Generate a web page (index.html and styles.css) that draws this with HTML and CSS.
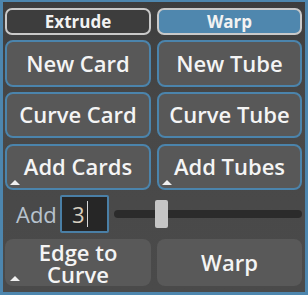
FILE: index.html
```html
<!DOCTYPE html>
<html lang="en">
<head>
    <meta charset="UTF-8">
    <title>Card Tools</title>
    <link rel="stylesheet" href="styles.css">
</head>
<body>
    <div class="panel">
        <div class="tabs">
            <button class="tab">Extrude</button>
            <button class="tab active">Warp</button>
        </div>
        <div class="grid">
            <button class="btn">New Card</button>
            <button class="btn">New Tube</button>
            <button class="btn">Curve Card</button>
            <button class="btn">Curve Tube</button>
            <button class="btn menu">Add Cards</button>
            <button class="btn menu">Add Tubes</button>
        </div>
        <div class="add-row">
            <span class="add-label">Add</span>
            <div class="count">3<span class="caret"></span></div>
            <div class="slider">
                <div class="groove"></div>
                <div class="thumb"></div>
            </div>
        </div>
        <div class="grid bottom">
            <button class="btn flat menu two-line">Edge to<br>Curve</button>
            <button class="btn flat">Warp</button>
        </div>
    </div>
</body>
</html>
```

FILE: styles.css
```css
body {
    margin: 0;
    font-family: "Open Sans", "Noto Sans", sans-serif;
}
.panel {
    width: 308px;
    height: 295px;
    box-sizing: border-box;
    border: 3px solid #4d86ae;
    border-top-width: 2px;
    padding: 6px 3px 1px 2px;
    background: linear-gradient(#3d3d3d, #484848 40%, #4a4a4a);
    display: flex;
    flex-direction: column;
}
.tabs {
    display: grid;
    grid-template-columns: 146px 145px;
    gap: 6px;
    height: 27px;
}
.tab {
    font-family: inherit;
    font-size: 17px;
    font-weight: 700;
    color: #f2f2f2;
    background: #3d3d3d;
    border: 2px solid #c9c9c9;
    border-radius: 7px;
    padding: 0;
    line-height: 1;
}
.tab.active {
    background: #4f87ae;
}
.grid {
    display: grid;
    grid-template-columns: 146px 145px;
    grid-auto-rows: 46px;
    gap: 6px;
    margin-top: 5px;
}
.grid .btn:nth-child(-n+2) {
    height: 47px;
}
.btn {
    position: relative;
    font-family: inherit;
    font-size: 22px;
    font-weight: 600;
    color: #f4f4f4;
    background: #585858;
    border: 2px solid #4b84ac;
    border-radius: 8px;
    padding: 0;
    line-height: 1.05;
}
.btn.menu::after {
    content: "";
    position: absolute;
    left: 3px;
    bottom: 3px;
    border-left: 5px solid transparent;
    border-right: 5px solid transparent;
    border-bottom: 5px solid #f0f0f0;
}
.btn.flat {
    border-color: transparent;
    background: #595959;
}
.bottom {
    grid-auto-rows: 51px;
    margin-top: 6px;
}
.two-line {
    line-height: 22px;
    padding-bottom: 2px;
}
.add-row {
    display: flex;
    align-items: center;
    height: 38px;
    margin-top: 5px;
}
.add-label {
    font-size: 22px;
    color: #b8c3ce;
    margin-left: 11px;
    width: 44px;
}
.count {
    box-sizing: border-box;
    width: 49px;
    height: 38px;
    background: #262626;
    border: 2px solid #4a7fa6;
    border-radius: 2px;
    color: #d8cfc0;
    font-size: 22px;
    padding-left: 10px;
    display: flex;
    align-items: center;
}
.caret {
    width: 1px;
    height: 26px;
    background: #d8d8d8;
    margin-left: 2px;
}
.slider {
    position: relative;
    flex: 1;
    height: 30px;
    margin-left: 5px;
}
.groove {
    position: absolute;
    left: 0;
    right: 0;
    top: 11px;
    height: 8px;
    background: #2b2b2b;
    border-radius: 4px;
}
.thumb {
    position: absolute;
    left: 41px;
    top: 1px;
    width: 13px;
    height: 28px;
    background: #c5c5c5;
    border-radius: 2px;
}
```
